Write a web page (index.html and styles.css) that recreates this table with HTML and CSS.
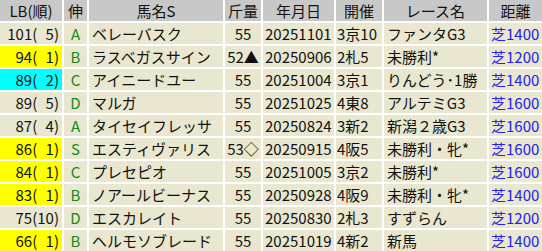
FILE: index.html
```html
<!DOCTYPE html>
<html lang="ja">
<head>
<meta charset="utf-8">
<link rel="stylesheet" href="styles.css">
</head>
<body>
<table class="tbl">
  <colgroup>
    <col class="c-lb"><col class="c-sn"><col class="c-name"><col class="c-kin"><col class="c-date"><col class="c-kai"><col class="c-race"><col class="c-dist">
  </colgroup>
  <thead>
    <tr><th>LB(順)</th><th>伸</th><th>馬名S</th><th>斤量</th><th>年月日</th><th>開催</th><th>レース名</th><th>距離</th></tr>
  </thead>
  <tbody>
    <tr><td class="lb">101(&#8199;5)</td><td class="sn">A</td><td class="nm">ベレーバスク</td><td class="kin">55</td><td class="dt">20251101</td><td class="kai">3京10</td><td class="race">ファンタG3</td><td class="dist">芝1400</td></tr>
    <tr><td class="lb yellow">94(&#8199;1)</td><td class="sn">B</td><td class="nm">ラスベガスサイン</td><td class="kin">52▲</td><td class="dt">20250906</td><td class="kai">2札5</td><td class="race">未勝利*</td><td class="dist">芝1200</td></tr>
    <tr><td class="lb cyan">89(&#8199;2)</td><td class="sn">C</td><td class="nm">アイニードユー</td><td class="kin">55</td><td class="dt">20251004</td><td class="kai">3京1</td><td class="race">りんどう･1勝</td><td class="dist">芝1400</td></tr>
    <tr><td class="lb">89(&#8199;5)</td><td class="sn">D</td><td class="nm">マルガ</td><td class="kin">55</td><td class="dt">20251025</td><td class="kai">4東8</td><td class="race">アルテミG3</td><td class="dist">芝1600</td></tr>
    <tr><td class="lb">87(&#8199;4)</td><td class="sn">A</td><td class="nm">タイセイフレッサ</td><td class="kin">55</td><td class="dt">20250824</td><td class="kai">3新2</td><td class="race">新潟２歳G3</td><td class="dist">芝1600</td></tr>
    <tr><td class="lb yellow">86(&#8199;1)</td><td class="sn">S</td><td class="nm">エスティヴァリス</td><td class="kin">53◇</td><td class="dt">20250915</td><td class="kai">4阪5</td><td class="race">未勝利・牝*</td><td class="dist">芝1600</td></tr>
    <tr><td class="lb yellow">84(&#8199;1)</td><td class="sn">C</td><td class="nm">プレセピオ</td><td class="kin">55</td><td class="dt">20251005</td><td class="kai">3京2</td><td class="race">未勝利*</td><td class="dist">芝1600</td></tr>
    <tr><td class="lb yellow">83(&#8199;1)</td><td class="sn">B</td><td class="nm">ノアールビーナス</td><td class="kin">55</td><td class="dt">20250928</td><td class="kai">4阪9</td><td class="race">未勝利・牝*</td><td class="dist">芝1400</td></tr>
    <tr><td class="lb">75(10)</td><td class="sn">D</td><td class="nm">エスカレイト</td><td class="kin">55</td><td class="dt">20250830</td><td class="kai">2札3</td><td class="race">すずらん</td><td class="dist">芝1200</td></tr>
    <tr><td class="lb yellow">66(&#8199;1)</td><td class="sn">B</td><td class="nm">ヘルモソブレード</td><td class="kin">55</td><td class="dt">20251019</td><td class="kai">4新2</td><td class="race">新馬</td><td class="dist">芝1400</td></tr>
  </tbody>
</table>
</body>
</html>
```

FILE: styles.css
```css
html, body {
  margin: 0;
  padding: 0;
  background: #ffffff;
}

.tbl {
  margin: -2px;
  border-collapse: separate;
  border-spacing: 2px;
  table-layout: fixed;
  width: 546px;
  font-family: "Noto Sans CJK JP", "Noto Sans", sans-serif;
  font-size: 15px;
  color: #111111;
}

.c-lb { width: 62px; }
.c-sn { width: 23px; }
.c-name { width: 134px; }
.c-kin { width: 36px; }
.c-date { width: 71px; }
.c-kai { width: 46px; }
.c-race { width: 103px; }
.c-dist { width: 53px; }

.tbl th,
.tbl td {
  padding: 0;
  white-space: pre;
  overflow: hidden;
  line-height: 21px;
  height: 21px;
}

.tbl th {
  background: #c8c8c8;
  font-weight: normal;
  text-align: center;
  height: 21px;
  line-height: 21px;
}

.tbl td {
  background: #e9e7cf;
}

.tbl td.lb {
  text-align: right;
  padding-right: 3px;
}

.tbl td.yellow { background: #ffff00; }
.tbl td.cyan { background: #00ffff; }

.tbl td.sn {
  text-align: center;
  color: #168a16;
}

.tbl td.nm {
  padding-left: 3px;
}

.tbl td.kin {
  text-align: center;
}

.tbl td.dt {
  padding-left: 2px;
}

.tbl td.kai {
  padding-left: 1px;
}

.tbl td.race {
  padding-left: 3px;
}

.tbl td.dist {
  padding-left: 2px;
  color: #2222ee;
}
```
